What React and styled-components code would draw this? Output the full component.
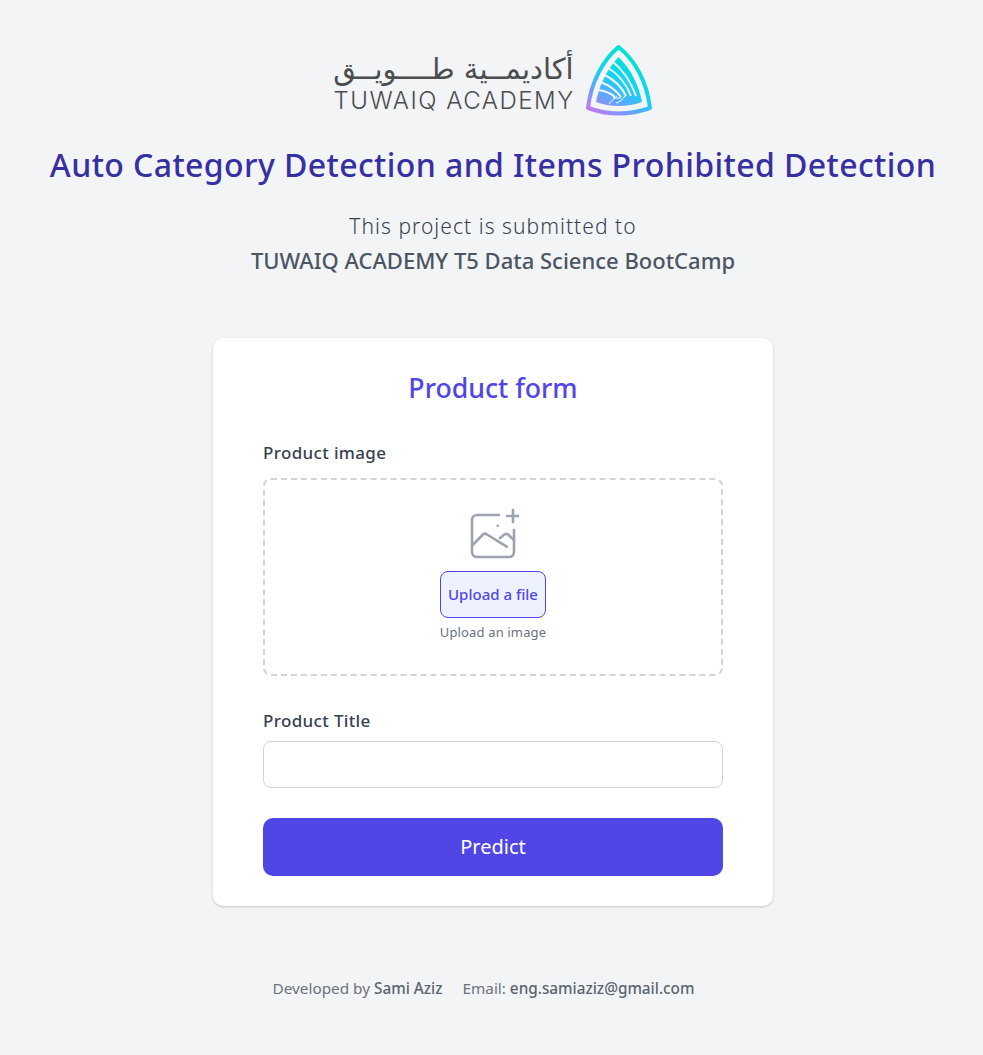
import styled, { createGlobalStyle } from "styled-components";

const GlobalStyle = createGlobalStyle`
  html, body {
    margin: 0;
    background: #f3f4f6;
    font-family: "Noto Sans", "DejaVu Sans", sans-serif;
  }
`;

const Page = styled.div`
  min-height: 1055px;
  box-sizing: border-box;
  padding: 44px 0 0 3px;
  display: flex;
  flex-direction: column;
  align-items: center;
`;

const Logo = styled.div`
  display: flex;
  align-items: center;
  gap: 11px;
  height: 72px;
`;

const LogoText = styled.div`
  display: flex;
  flex-direction: column;
  align-items: flex-end;
  color: #4b4d4f;
`;

const LogoArabic = styled.div`
  font-family: "DejaVu Sans", sans-serif;
  font-size: 29px;
  line-height: 47px;
  height: 41px;
  direction: rtl;
  white-space: nowrap;
`;

const LogoLatin = styled.div`
  font-family: "Inter", sans-serif;
  font-size: 24px;
  font-weight: 300;
  line-height: 28px;
  letter-spacing: 1.5px;
  margin-right: -1px;
`;

const Title = styled.h1`
  margin: 27px 0 0;
  font-size: 32px;
  line-height: 44px;
  font-weight: 500;
  letter-spacing: 0.4px;
  color: #3730a3;
`;

const Subtitle = styled.p`
  margin: 23px 0 0;
  font-size: 21px;
  line-height: 33px;
  font-weight: 300;
  letter-spacing: 1.05px;
  color: #374151;
`;

const SubtitleStrong = styled.p`
  margin: 0;
  font-size: 22px;
  line-height: 34px;
  font-weight: 500;
  color: #4b5563;
`;

const Card = styled.form`
  width: 560px;
  height: 568px;
  box-sizing: border-box;
  margin-top: 61px;
  padding: 30px 50px;
  background: #fff;
  border-radius: 10px;
  box-shadow: 0 1px 3px rgba(0, 0, 0, 0.12), 0 1px 2px rgba(0, 0, 0, 0.08);
`;

const CardTitle = styled.h2`
  margin: 0;
  text-align: center;
  font-size: 26.7px;
  line-height: 40px;
  font-weight: 500;
  color: #4f46e5;
`;

const Label = styled.label`
  display: block;
  margin-top: ${props => props.$top}px;
  font-size: 17px;
  line-height: 24px;
  font-weight: 500;
  letter-spacing: 0.35px;
  color: #374151;
`;

const Dropzone = styled.div`
  box-sizing: border-box;
  height: 198px;
  margin-top: 13px;
  padding-top: 29px;
  border: 2px dashed #d1d5db;
  border-radius: 8px;
  display: flex;
  flex-direction: column;
  align-items: center;
`;

const UploadButton = styled.button`
  box-sizing: border-box;
  width: 106px;
  height: 47px;
  margin-top: 12px;
  padding: 0 0 2px;
  border: 1px solid #4f46e5;
  border-radius: 8px;
  background: #eef2ff;
  color: #4f46e5;
  font-family: inherit;
  font-size: 15px;
  font-weight: 500;
`;

const Hint = styled.p`
  margin: 6px 0 0;
  font-size: 13px;
  line-height: 16px;
  letter-spacing: 0.15px;
  color: #6b7280;
`;

const Input = styled.input`
  display: block;
  box-sizing: border-box;
  width: 100%;
  height: 47px;
  margin-top: 8px;
  border: 1px solid #d1d5db;
  border-radius: 8px;
  background: #fff;
`;

const Submit = styled.button`
  display: block;
  width: 100%;
  height: 58px;
  margin-top: 30px;
  padding: 0 0 2px;
  border: 0;
  border-radius: 10px;
  background: #4f46e5;
  color: #fff;
  font-family: inherit;
  font-size: 20px;
  font-weight: 400;
`;

const Footer = styled.footer`
  margin: 70px 19px 0 0;
  display: flex;
  gap: 20px;
  font-size: 15.3px;
  line-height: 24px;
  color: #6b7280;
`;

const FooterStrong = styled.span`
  font-weight: 500;
  color: #5b6472;
`;

const TuwaiqMark = () => (
  <svg width="68" height="72" viewBox="0 0 68 72" fill="none">
    <defs>
      <linearGradient id="mark" x1="50" y1="8" x2="12" y2="70" gradientUnits="userSpaceOnUse">
        <stop offset="0" stopColor="#00e5c8" />
        <stop offset="0.45" stopColor="#10d4f5" />
        <stop offset="0.75" stopColor="#6aa0fb" />
        <stop offset="1" stopColor="#c07af5" />
      </linearGradient>
    </defs>
    <path
      d="M33.5 3 C18 16 6 38 3 64 C14 68 24 69.5 33.5 69.5 C43 69.5 54 68 65 64 C62 38 50 16 33.5 3 Z"
      stroke="url(#mark)"
      strokeWidth="4"
      strokeLinejoin="round"
    />
    <path
      d="M33.5 13 C23 24 14 41 11 58 C18 60.5 26 62 33.5 62 C42 62 50 60.5 57 58 C54 41 45 24 33.5 13 Z"
      fill="url(#mark)"
    />
    <path
      d="M27 17 C37 25 46 38 51 52 M22 23 C33 30 42 41 46 52 M18 30 C28 35 37 43 41 52 M15 38 C24 41 31 46 36 53 M13 46 C20 47 26 49 30 53"
      stroke="#f3f4f6"
      strokeWidth="2"
    />
    <path d="M24 60 C27 56 30 54 32 52 M31 59 C35 58 38 55 40 52 M28 54 H36" stroke="#fff" strokeWidth="1" />
  </svg>
);

const ImagePlusIcon = () => (
  <svg width="52" height="50" viewBox="0 0 52 50" fill="none" stroke="#9ca3af" strokeWidth="2.6" strokeLinecap="round" strokeLinejoin="round">
    <path d="M32 6 H10 a5 5 0 0 0 -5 5 V43 a5 5 0 0 0 5 5 H42 a5 5 0 0 0 5 -5 V21" />
    <path d="M5.7 36 L16 25.5 a3 3 0 0 1 4 0 L39.7 37.7" />
    <path d="M33 29 L37.5 25.5 a3 3 0 0 1 3.5 0 L47 31" />
    <path d="M46 1 V13 M40 7 H52" />
    <path d="M30.7 16.7 h.01" />
  </svg>
);

export default function App() {
  return (
    <>
      <GlobalStyle />
      <Page>
        <Logo>
          <LogoText>
            <LogoArabic>أكاديمــية طــــويــق</LogoArabic>
            <LogoLatin>TUWAIQ ACADEMY</LogoLatin>
          </LogoText>
          <TuwaiqMark />
        </Logo>
        <Title>Auto Category Detection and Items Prohibited Detection</Title>
        <Subtitle>This project is submitted to</Subtitle>
        <SubtitleStrong>TUWAIQ ACADEMY T5 Data Science BootCamp</SubtitleStrong>
        <Card>
          <CardTitle>Product form</CardTitle>
          <Label $top={33}>Product image</Label>
          <Dropzone>
            <ImagePlusIcon />
            <UploadButton type="button">Upload a file</UploadButton>
            <Hint>Upload an image</Hint>
          </Dropzone>
          <Label $top={33}>Product Title</Label>
          <Input type="text" />
          <Submit type="button">Predict</Submit>
        </Card>
        <Footer>
          <span>
            Developed by <FooterStrong>Sami Aziz</FooterStrong>
          </span>
          <span>
            Email: <FooterStrong>eng.samiaziz@gmail.com</FooterStrong>
          </span>
        </Footer>
      </Page>
    </>
  );
}
